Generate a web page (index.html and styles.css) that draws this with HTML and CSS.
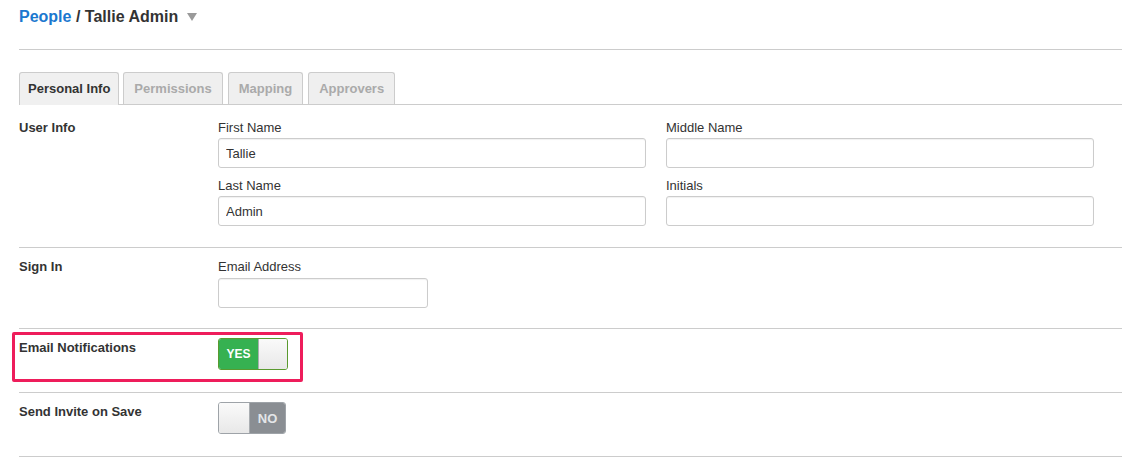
FILE: index.html
```html
<!DOCTYPE html>
<html lang="en">

<head>
    <meta charset="UTF-8">
    <meta name="viewport" content="width=device-width, initial-scale=1.0">
    <title>Tallie Admin</title>
    <link rel="stylesheet" href="styles.css">
</head>

<body>
    <div class="page">
        <header class="page-header">
            <h1 class="crumbs"><a href="#" class="crumb-link">People</a> / Tallie Admin<svg class="caret" width="10" height="8" viewBox="0 0 10 8"><polygon points="0,0 10,0 5,8" fill="#9a9a9a" /></svg></h1>
        </header>

        <ul class="tabs">
            <li class="tab active">Personal Info</li>
            <li class="tab">Permissions</li>
            <li class="tab">Mapping</li>
            <li class="tab">Approvers</li>
        </ul>

        <section class="form-row first">
            <div class="row-label">User Info</div>
            <div class="fields two-col">
                <div class="field">
                    <label>First Name</label>
                    <input type="text" value="Tallie">
                </div>
                <div class="field">
                    <label>Middle Name</label>
                    <input type="text" value="">
                </div>
                <div class="field">
                    <label>Last Name</label>
                    <input type="text" value="Admin">
                </div>
                <div class="field">
                    <label>Initials</label>
                    <input type="text" value="">
                </div>
            </div>
        </section>

        <section class="form-row">
            <div class="row-label">Sign In</div>
            <div class="fields">
                <div class="field">
                    <label>Email Address</label>
                    <input type="text" class="short" value="">
                </div>
            </div>
        </section>

        <section class="form-row toggle-row">
            <div class="highlight"></div>
            <div class="row-label">Email Notifications</div>
            <div class="switch on">
                <span class="switch-text">YES</span>
                <span class="knob"></span>
            </div>
        </section>

        <section class="form-row toggle-row">
            <div class="row-label">Send Invite on Save</div>
            <div class="switch off">
                <span class="knob"></span>
                <span class="switch-text">NO</span>
            </div>
        </section>
    </div>
</body>

</html>
```

FILE: styles.css
```css
body {
    margin: 0;
    padding: 0;
    background: #fff;
    font-family: 'Liberation Sans', Arial, sans-serif;
    color: #333;
}

.page {
    padding-left: 19px;
}

.page-header {
    padding: 7px 0 22px;
    border-bottom: 1px solid #ccc;
}

.crumbs {
    margin: 0;
    font-size: 16px;
    line-height: 20px;
    font-weight: bold;
    color: #333;
}

.crumb-link {
    color: #1b78cf;
    text-decoration: none;
}

.caret {
    margin-left: 9px;
    vertical-align: 1px;
}

.tabs {
    list-style: none;
    margin: 22px 0 0;
    padding: 0;
    display: flex;
    gap: 5px;
    border-bottom: 1px solid #ccc;
    height: 32px;
}

.tab {
    padding: 0 10px;
    height: 31px;
    line-height: 31px;
    font-size: 13px;
    font-weight: bold;
    color: #aaa;
    background: #efefef;
    border: 1px solid #ccc;
    border-bottom: none;
    border-radius: 3px 3px 0 0;
}

.tab.active {
    padding: 0 8px;
    margin-right: -1px;
    color: #333;
    height: 32px;
    background: #f0f0f0;
}

.form-row {
    position: relative;
    display: flex;
    padding: 11px 0 20px;
    border-bottom: 1px solid #ccc;
}

.form-row.first {
    padding-top: 15px;
    padding-bottom: 21px;
}

.row-label {
    width: 199px;
    flex: none;
    font-size: 13px;
    line-height: 16px;
    font-weight: bold;
    color: #333;
}

.fields.two-col {
    display: grid;
    grid-template-columns: 428px 428px;
    column-gap: 20px;
    row-gap: 10px;
}

.field label {
    display: block;
    font-size: 13px;
    line-height: 16px;
    margin-bottom: 3px;
}

.two-col .field label {
    margin-bottom: 2px;
}

.field input {
    display: block;
    box-sizing: border-box;
    width: 428px;
    height: 30px;
    padding: 0 7px;
    border: 1px solid #ccc;
    border-radius: 3px;
    box-shadow: inset 0 1px 1px rgba(0, 0, 0, 0.06);
    font-family: 'Liberation Sans', Arial, sans-serif;
    font-size: 13px;
    color: #333;
    outline: none;
}

.field input.short {
    width: 210px;
}

.toggle-row {
    padding: 9px 0 22px;
}

.toggle-row .row-label {
    margin-top: 2px;
}

.highlight {
    position: absolute;
    top: 3px;
    left: -7px;
    width: 291px;
    height: 50px;
    box-sizing: border-box;
    border: 3px solid #ee1d5b;
    border-radius: 2px;
}

.switch {
    display: flex;
    height: 32px;
    box-sizing: border-box;
    border-radius: 3px;
    overflow: hidden;
    border: 1px solid #9ea3a8;
}

.switch.on {
    width: 70px;
    border-color: #5a9a2f;
}

.switch.off {
    width: 68px;
}

.switch-text {
    display: flex;
    align-items: center;
    justify-content: center;
    font-size: 12px;
    font-weight: bold;
    color: #fff;
}

.switch.on .switch-text {
    width: 39px;
    background: #36b151;
}

.switch.off .switch-text {
    flex: 1;
    background: #8a8e93;
    color: #e4e6e8;
    font-size: 13px;
}

.knob {
    width: 30px;
    background: linear-gradient(#fafafa, #e8e8e8);
}

.switch.on .knob {
    flex: 1;
    border-left: 1px solid #a9adb1;
}

.switch.off .knob {
    border-right: 1px solid #a9adb1;
}
```
